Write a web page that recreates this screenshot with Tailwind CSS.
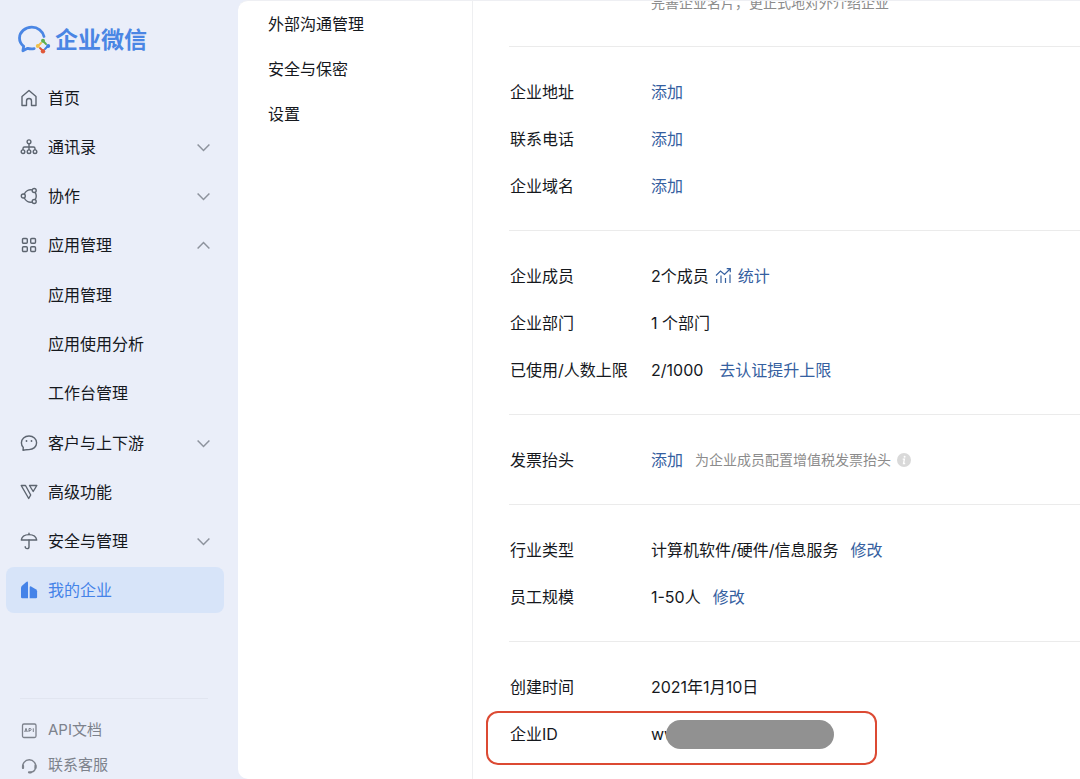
<!DOCTYPE html>
<html lang="zh-CN">
<head>
    <meta charset="utf-8">
    <meta name="viewport" content="width=device-width, initial-scale=1">
    <title>企业微信</title>
    <script src="https://cdn.jsdelivr.net/npm/@tailwindcss/browser@4"></script>
</head>
<body class="h-screen flex overflow-hidden bg-[#eaeef9] text-base text-[#15181d] font-[Inter,'Noto_Sans_CJK_SC',sans-serif]">
    <aside class="w-[238px] shrink-0 flex flex-col">
        <a href="#" class="mt-5 ml-[17px] h-10 shrink-0 flex items-center gap-1 text-[23px] font-bold text-[#4a86e4]">
            <svg class="w-[34px] h-[34px]" viewBox="0 0 34 34" fill="none">
                <path d="M27 13.500C25.800 8 20.800 4.200 14.800 4.200 8 4.200 2.500 9 2.500 15c0 3.400 1.700 6.300 4.200 8.300l-.8 4.500 4.800-2.500c2 .6 4.300.7 6.500.3" stroke="#4a86e4" stroke-width="2.800" stroke-linecap="round" stroke-linejoin="round"/>
                <g stroke-width="2" stroke-linecap="round">
                    <path d="M26 18l3 3" stroke="#5fb04f"/>
                    <path d="M31 23l-3 3" stroke="#3f7fe0"/>
                    <path d="M26 28l-3-3" stroke="#e0583a"/>
                    <path d="M21 23l3-3" stroke="#f0c04a"/>
                </g>
                <circle cx="26" cy="17.800" r="2" fill="#5fb04f"/>
                <circle cx="31.200" cy="23" r="2" fill="#3f7fe0"/>
                <circle cx="26" cy="28.300" r="2.200" fill="#e0583a"/>
                <circle cx="20.800" cy="23" r="2" fill="#f0c04a"/>
            </svg>
            <span>企业微信</span>
        </a>
        <nav class="mt-[15px] pl-[6px] pr-[14px] flex flex-col gap-[3px]">
            <a href="#" class="h-[46px] px-[14px] flex items-center gap-[10px] rounded-lg">
                <svg class="w-[18px] h-[18px] text-[#5d6570]" viewBox="0 0 18 18" fill="none" stroke="currentColor" stroke-width="1.400" stroke-linejoin="round"><path d="M2 7.500L9 1.500l7 6V16.500h-4.500V12a2.500 2.500 0 0 0-5 0v4.500H2z"/></svg>
                首页
            </a>
            <a href="#" class="h-[46px] px-[14px] flex items-center gap-[10px] rounded-lg">
                <svg class="w-[18px] h-[18px] text-[#5d6570]" viewBox="0 0 18 18" fill="none" stroke="currentColor" stroke-width="1.400"><circle cx="9" cy="3.800" r="1.900"/><circle cx="3" cy="13.700" r="1.800"/><circle cx="9" cy="13.700" r="1.800"/><circle cx="15" cy="13.700" r="1.800"/><path d="M9 5.700v6.200M3 11.900V10.500q0-1.500 1.500-1.500h9q1.500 0 1.500 1.500v1.400"/></svg>
                通讯录
                <svg class="ml-auto w-[13px] h-[13px] text-[#8d939d]" viewBox="0 0 13 13" fill="none" stroke="currentColor" stroke-width="1.500"><path d="M.6 3.500l5.900 6 5.900-6"/></svg>
            </a>
            <a href="#" class="h-[46px] px-[14px] flex items-center gap-[10px] rounded-lg">
                <svg class="w-[18px] h-[18px] text-[#5d6570]" viewBox="0 0 18 18" fill="none" stroke="currentColor" stroke-width="1.400"><circle cx="3.300" cy="9" r="2"/><circle cx="14.200" cy="3.500" r="2"/><circle cx="14.200" cy="14.500" r="2"/><path d="M4.200 7.200A7.200 7.200 0 0 1 12.200 2.900M4.200 10.800A7.200 7.200 0 0 0 12.200 15.100M15.200 5.300a7.500 7.500 0 0 1 0 7.400"/></svg>
                协作
                <svg class="ml-auto w-[13px] h-[13px] text-[#8d939d]" viewBox="0 0 13 13" fill="none" stroke="currentColor" stroke-width="1.500"><path d="M.6 3.500l5.900 6 5.900-6"/></svg>
            </a>
            <a href="#" class="h-[46px] px-[14px] flex items-center gap-[10px] rounded-lg">
                <svg class="w-[18px] h-[18px] text-[#5d6570]" viewBox="0 0 18 18" fill="none" stroke="currentColor" stroke-width="1.400"><rect x="2.500" y="2.500" width="4.800" height="4.800" rx="1"/><rect x="10.700" y="2.500" width="4.800" height="4.800" rx="1"/><rect x="2.500" y="10.700" width="4.800" height="4.800" rx="1"/><rect x="10.700" y="10.700" width="4.800" height="4.800" rx="1"/></svg>
                应用管理
                <svg class="ml-auto w-[13px] h-[13px] text-[#8d939d]" viewBox="0 0 13 13" fill="none" stroke="currentColor" stroke-width="1.500"><path d="M.6 9.500l5.900-6 5.900 6"/></svg>
            </a>
            <div class="py-px flex flex-col gap-[3px]">
                <a href="#" class="h-[46px] pl-[42px] flex items-center rounded-lg">应用管理</a>
                <a href="#" class="h-[46px] pl-[42px] flex items-center rounded-lg">应用使用分析</a>
                <a href="#" class="h-[46px] pl-[42px] flex items-center rounded-lg">工作台管理</a>
            </div>
            <a href="#" class="h-[46px] px-[14px] flex items-center gap-[10px] rounded-lg">
                <svg class="w-[18px] h-[18px] text-[#5d6570]" viewBox="0 0 18 18" fill="none" stroke="currentColor" stroke-width="1.400" stroke-linejoin="round"><path d="M9 2c4.400 0 7.600 3 7.600 6.800S13.400 15.600 9 15.600c-1.200 0-2.300 0-3.300.2L3 16.200l.3-2.700C2 12.300 1.400 10.700 1.400 8.800 1.400 5 4.600 2 9 2z"/><circle cx="6.500" cy="7" r=".9" fill="currentColor" stroke="none"/><circle cx="11.500" cy="7" r=".9" fill="currentColor" stroke="none"/></svg>
                客户与上下游
                <svg class="ml-auto w-[13px] h-[13px] text-[#8d939d]" viewBox="0 0 13 13" fill="none" stroke="currentColor" stroke-width="1.500"><path d="M.6 3.500l5.900 6 5.900-6"/></svg>
            </a>
            <a href="#" class="h-[46px] px-[14px] flex items-center gap-[10px] rounded-lg">
                <svg class="w-[18px] h-[18px] text-[#5d6570]" viewBox="0 0 18 18" fill="none" stroke="currentColor" stroke-width="1.400" stroke-linejoin="round"><path d="M1.200 2.500h4.300l5.200 9.500-2 3.500z"/><path d="M9.500 2.500h7.300L13.200 8.500z"/></svg>
                高级功能
            </a>
            <a href="#" class="h-[46px] px-[14px] flex items-center gap-[10px] rounded-lg">
                <svg class="w-[18px] h-[18px] text-[#5d6570]" viewBox="0 0 18 18" fill="none" stroke="currentColor" stroke-width="1.400" stroke-linejoin="round" stroke-linecap="round"><path d="M1.300 8C1.800 4.500 5 2.600 9 2.600S16.200 4.500 16.700 8z"/><path d="M9 1.300v1.300M9 8v6.700a1.900 1.900 0 0 1-3.800 0"/></svg>
                安全与管理
                <svg class="ml-auto w-[13px] h-[13px] text-[#8d939d]" viewBox="0 0 13 13" fill="none" stroke="currentColor" stroke-width="1.500"><path d="M.6 3.500l5.900 6 5.900-6"/></svg>
            </a>
            <a href="#" class="h-[46px] px-[14px] flex items-center gap-[10px] rounded-lg bg-[#d7e4f9] text-[#4583e8]">
                <svg class="w-[18px] h-[18px]" viewBox="0 0 18 18" fill="currentColor"><path d="M1 7q0-1.300 1-2.200L6 1.200q2-1.500 2 .8V17.300H2.200Q1 17.300 1 16.100z"/><path d="M9.700 6.400q0-1.600 1.400-.9l4.700 2.700q1.300.8 1.300 2v5.900q0 1.200-1.200 1.200H9.700z"/></svg>
                我的企业
            </a>
        </nav>
        <div class="mt-[85px] ml-5 mr-[30px] pt-[14px] border-t border-[#e1e5f0] text-[15px] text-[#7d828c]">
            <a href="#" class="h-[35px] flex items-center gap-[10px]">
                <svg class="w-[18px] h-[18px]" viewBox="0 0 18 18" fill="none" stroke="currentColor" stroke-width="1.300"><rect x="2.500" y="2" width="13.500" height="13.500" rx="1.500"/><path d="M4.700 10l1.300-3.700 1.300 3.700M5.100 9h1.800M9 10V6.500h1.200a1 1 0 0 1 0 2H9M13.300 6.300v3.700" stroke-width="1"/></svg>
                API文档
            </a>
            <a href="#" class="h-[35px] flex items-center gap-[10px]">
                <svg class="w-[18px] h-[18px]" viewBox="0 0 18 18" fill="none" stroke="currentColor" stroke-width="1.400" stroke-linecap="round"><path d="M3 11A6.500 6.500 0 1 1 15.500 11C15 13.500 13.500 14.800 11 15.100"/><path d="M3 8.700v2.300M15.500 8.700v2.300M9 15.300h2" stroke-width="2.200"/></svg>
                联系客服
            </a>
        </div>
    </aside>
    <div class="flex-1 min-w-0 flex rounded-l-[10px] border-t border-[#eeeff3] bg-white overflow-hidden">
        <nav class="w-[235px] shrink-0 pl-[30px] flex flex-col border-r border-[#eeeff1]">
            <a href="#" class="h-[45px] flex items-center">外部沟通管理</a>
            <a href="#" class="h-[45px] flex items-center">安全与保密</a>
            <a href="#" class="h-[45px] flex items-center">设置</a>
        </nav>
        <main class="flex-1 min-w-0 pl-9">
            <section class="-mt-[23px] pb-[19px]">
                <p class="h-[49px] pl-[142px] flex items-center text-sm text-[#8c8c8c]">完善企业名片，更正式地对外介绍企业</p>
            </section>
            <dl class="border-t border-[#ebebeb] py-[21px] pl-px">
                <div class="h-[47px] flex items-center">
                    <dt class="w-[141px]">企业地址</dt>
                    <dd><a href="#" class="text-[#3560a0]">添加</a></dd>
                </div>
                <div class="h-[47px] flex items-center">
                    <dt class="w-[141px]">联系电话</dt>
                    <dd><a href="#" class="text-[#3560a0]">添加</a></dd>
                </div>
                <div class="h-[47px] flex items-center">
                    <dt class="w-[141px]">企业域名</dt>
                    <dd><a href="#" class="text-[#3560a0]">添加</a></dd>
                </div>
            </dl>
            <dl class="border-t border-[#ebebeb] py-[21px] pl-px">
                <div class="h-[47px] flex items-center">
                    <dt class="w-[141px]">企业成员</dt>
                    <dd class="flex items-center gap-[6px]">
                        2个成员
                        <a href="#" class="flex items-center gap-[6px] text-[#3560a0]">
                            <svg class="w-[17px] h-[17px]" viewBox="0 0 17 17" fill="none" stroke="currentColor" stroke-width="1.200"><path d="M1 8.500l4.500-4.500 4 3.500L15 2M11.700 1.700h3.600v3.600M1.700 12v4M6 8.500V16M10.500 11v5M15 7.500V16"/></svg>
                            统计
                        </a>
                    </dd>
                </div>
                <div class="h-[47px] flex items-center">
                    <dt class="w-[141px]">企业部门</dt>
                    <dd>1 个部门</dd>
                </div>
                <div class="h-[47px] flex items-center">
                    <dt class="w-[141px]">已使用/人数上限</dt>
                    <dd class="flex gap-4">2/1000 <a href="#" class="text-[#3560a0]">去认证提升上限</a></dd>
                </div>
            </dl>
            <dl class="border-t border-[#ebebeb] py-[21px] pl-px">
                <div class="h-[47px] flex items-center">
                    <dt class="w-[141px]">发票抬头</dt>
                    <dd class="flex items-center">
                        <a href="#" class="text-[#3560a0]">添加</a>
                        <span class="ml-3 text-sm text-[#8c8c8c]">为企业成员配置增值税发票抬头</span>
                        <svg class="ml-[6px] w-[14px] h-[14px]" viewBox="0 0 14 14"><circle cx="7" cy="7" r="7" fill="#d9d9d9"/><circle cx="7.600" cy="3.700" r="1" fill="#fff"/><path d="M5.700 6.200h1.700l-.9 4.300h1.700" fill="none" stroke="#fff" stroke-width="1.300"/></svg>
                    </dd>
                </div>
            </dl>
            <dl class="border-t border-[#ebebeb] py-[21px] pl-px">
                <div class="h-[47px] flex items-center">
                    <dt class="w-[141px]">行业类型</dt>
                    <dd class="flex gap-3">计算机软件/硬件/信息服务 <a href="#" class="text-[#3560a0]">修改</a></dd>
                </div>
                <div class="h-[47px] flex items-center">
                    <dt class="w-[141px]">员工规模</dt>
                    <dd class="flex gap-3">1-50人 <a href="#" class="text-[#3560a0]">修改</a></dd>
                </div>
            </dl>
            <dl class="border-t border-[#ebebeb] py-[21px] pl-px">
                <div class="h-[47px] flex items-center">
                    <dt class="w-[141px]">创建时间</dt>
                    <dd>2021年1月10日</dd>
                </div>
                <div class="relative h-[47px] flex items-center">
                    <dt class="w-[141px]">企业ID</dt>
                    <dd>ww</dd>
                    <!-- redacted id + highlight -->
                    <div class="absolute left-[156px] top-[10px] w-[168px] h-[29px] rounded-full bg-[#919191]"></div>
                    <div class="absolute -left-6 top-px w-[391px] h-[54px] rounded-xl border-2 border-[#dc4a33]"></div>
                </div>
            </dl>
        </main>
    </div>
</body>
</html>
